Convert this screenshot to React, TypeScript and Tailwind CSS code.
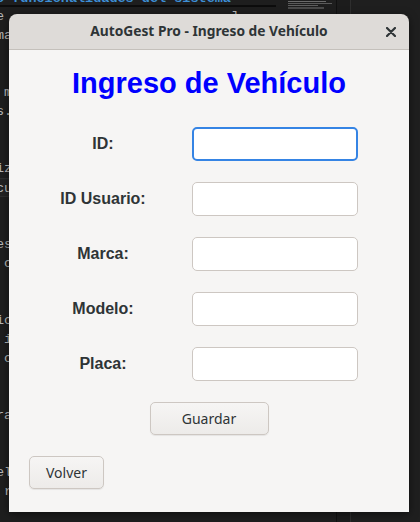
const codeLines = [
  "e                            ]",
  "manejo de la base de datos",
  "",
  "",
  " mostrar el listado",
  "s.",
  "",
  "",
  "izar los datos",
  "cuenta del usuario",
  "",
  "",
  "es",
  " con",
  "",
  "",
  "icio",
  " ingreso",
  " control",
  "",
  "",
  "ra",
  "",
  "",
  "el",
  " registro",
];

const fields = ["ID:", "ID Usuario:", "Marca:", "Modelo:", "Placa:"];

const FormRow: React.FC<{ label: string; focused?: boolean }> = ({ label, focused }) => {
  return (
    <div className="flex items-center h-[34px] pl-[20px]">
      <label className="w-[148px] text-center text-[16px] font-bold text-[#2e3436] font-['Liberation_Sans',Arial,sans-serif]">
        {label}
      </label>
      <input
        type="text"
        readOnly
        className={
          focused
            ? "ml-[15px] w-[166px] h-[34px] rounded-[5px] bg-white border-2 border-[#3584e4] outline-none"
            : "ml-[15px] w-[166px] h-[34px] rounded-[5px] bg-white border border-[#cdc7c2] outline-none"
        }
      />
    </div>
  );
};

export default function App() {
  return (
    <div className="relative w-[420px] h-[522px] overflow-hidden bg-[#1e1e1e]">
      {/* editor behind the dialog */}
      <div className="flex h-full">
        <div className="w-[288px] flex flex-col -mt-[10px] font-['Liberation_Mono',monospace] text-[13.5px] leading-[19px] whitespace-pre">
          <div className="h-[17px] w-[280px] border-b-2 border-[#0c0c0c] -ml-[4px] text-[#3d8fd6] font-bold leading-[17px]">
            {"o funcionalidades del sistema"}
          </div>
          {codeLines.map((line, i) => (
            <div
              key={i}
              className={
                i === 9
                  ? "h-[19px] -ml-[4px] text-[#b8b8b8] bg-[#232323] border-y border-[#2e2e2e]"
                  : "h-[19px] -ml-[4px] text-[#b8b8b8]"
              }
            >
              {line}
            </div>
          ))}
        </div>
        <div className="w-[48px] flex flex-col gap-[1px] pt-[1px]">
          <div className="h-[1px] w-[38px] bg-[#6a6a6a]" />
          <div className="h-[1px] w-[44px] bg-[#5a5a5a]" />
          <div className="h-[1px] w-[30px] bg-[#5e5e5e]" />
          <div className="h-[2px] w-[36px] bg-[#4a4a4a]" />
          <div className="h-[3px]" />
          <div className="h-[1px] w-[12px] bg-[#3d7fc4]" />
          <div className="h-[1px] w-[40px] bg-[#555]" />
        </div>
        <div className="w-[1px] bg-[#111111]" />
        <div className="w-[13px] bg-[#1c1c1c]" />
        <div className="w-[1px] bg-[#2e2e2e]" />
        <div className="flex-1 bg-[#1f1f1f]" />
      </div>

      {/* dialog window */}
      <div className="absolute left-[9px] top-[14px] w-[400px] h-[498px] flex flex-col rounded-t-[8px] overflow-hidden shadow-[0_2px_8px_rgba(0,0,0,0.5)]">
        <div className="h-[36px] flex items-center bg-[#dedbd8] border-b border-[#c4c0bb]">
          <div className="w-[36px]" />
          <div className="flex-1 text-center text-[13.75px] font-bold text-[#2e3436] font-['Noto_Sans',sans-serif]">
            AutoGest Pro - Ingreso de Vehículo
          </div>
          <div className="w-[36px] flex items-center justify-center">
            <svg width="10" height="10" viewBox="0 0 10 10">
              <path d="M1 1 L9 9 M9 1 L1 9" stroke="#2e3436" strokeWidth="2.2" strokeLinecap="round" />
            </svg>
          </div>
        </div>

        <div className="flex-1 flex flex-col bg-[#f6f5f4]">
          <h1 className="pt-[16px] text-center text-[29px] leading-[34px] font-bold text-[#0000ff] font-['Liberation_Sans',Arial,sans-serif]">
            Ingreso de Vehículo
          </h1>

          <div className="mt-[27px] flex flex-col gap-[21px]">
            {fields.map((f, i) => (
              <FormRow key={f} label={f} focused={i === 0} />
            ))}
          </div>

          <button className="mt-[21px] self-center w-[119px] h-[33px] rounded-[5px] border border-[#cdc7c2] bg-gradient-to-b from-[#f6f5f4] to-[#edebe9] text-[14px] text-[#2e3436] font-['Noto_Sans',sans-serif] shadow-[0_1px_1px_rgba(0,0,0,0.07)]">
            Guardar
          </button>

          <button className="mt-[21px] ml-[20px] self-start w-[75px] h-[33px] rounded-[5px] border border-[#cdc7c2] bg-gradient-to-b from-[#f6f5f4] to-[#edebe9] text-[14px] text-[#2e3436] font-['Noto_Sans',sans-serif] shadow-[0_1px_1px_rgba(0,0,0,0.07)]">
            Volver
          </button>
        </div>
      </div>
    </div>
  );
}
